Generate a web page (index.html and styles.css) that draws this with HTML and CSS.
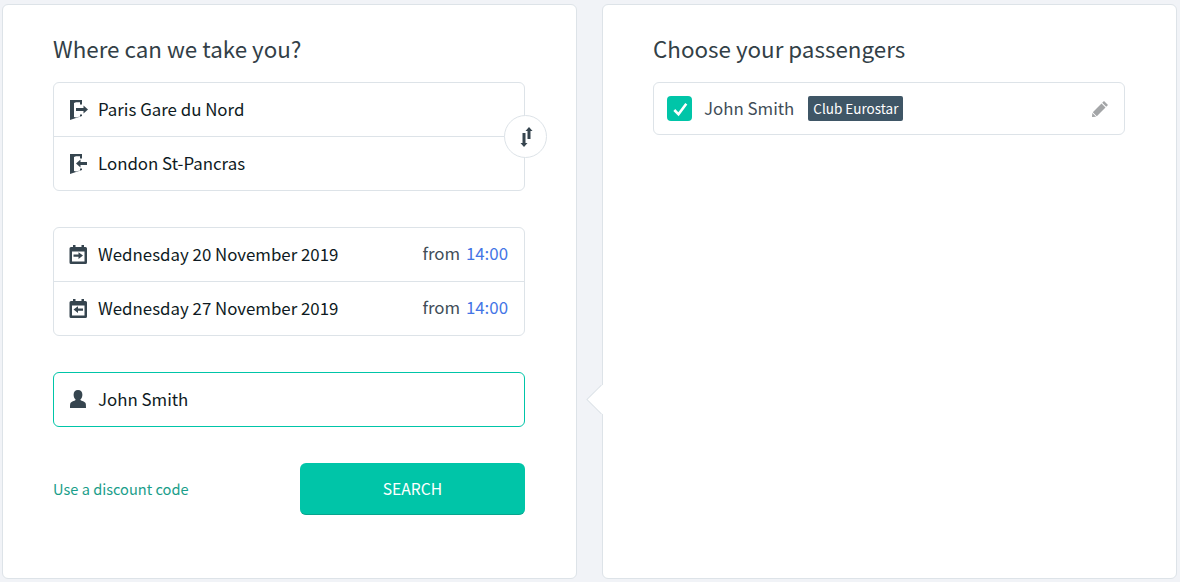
FILE: index.html
```html
<!DOCTYPE html>
<html lang="en">
<head>
  <meta charset="UTF-8">
  <title>Search trains</title>
  <link rel="stylesheet" href="styles.css">
</head>
<body>
  <div class="layout">
    <section class="panel">
      <h2 class="panel-title">Where can we take you?</h2>

      <div class="field-group route-group">
        <div class="field-row">
          <svg class="field-icon" viewBox="0 0 20 20"><path d="M0 0h12v4.500H10V2.200H6L4 3v14l2 .6 4-1.200v-1.900h2V16L0 20z"/><path d="M6 8h7.500V5.500l4.500 4-4.500 4V11H6z"/></svg>
          <span class="field-text">Paris Gare du Nord</span>
        </div>
        <div class="field-row">
          <svg class="field-icon" viewBox="0 0 20 20"><path d="M0 0h12v4.500H10V2.200H6L4 3v14l2 .6 4-1.200v-1.900h2V16L0 20z"/><path d="M17 8h-6.500V5.500L6 9.500l4.500 4V11H17z"/></svg>
          <span class="field-text">London St-Pancras</span>
        </div>
        <button class="swap-btn" type="button" aria-label="Swap stations">
          <svg viewBox="0 0 16 22" width="16" height="22"><path d="M11 1l3.500 4h-2v8h-3V5h-2z"/><path d="M4.500 7h3v10h2L6 21l-3.500-4h2z"/></svg>
        </button>
      </div>

      <div class="field-group">
        <div class="field-row">
          <svg class="field-icon" viewBox="0 0 20 20"><path fill-rule="evenodd" d="M3 0h2.500v2h6V0H14v2h1.500A1.500 1.500 0 0 1 17 3.500v14a1.500 1.500 0 0 1-1.500 1.500H1a1.500 1.500 0 0 1-1.500-1.500v-14A1.500 1.500 0 0 1 1 2h2zM2 6.500v10h12.500v-10z"/><path d="M3.500 9.500h5V7.300l4.500 3.300-4.500 3.300v-2.200h-5z"/></svg>
          <span class="field-text">Wednesday 20 November 2019</span>
          <span class="time-text">from <span class="time-value">14:00</span></span>
        </div>
        <div class="field-row">
          <svg class="field-icon" viewBox="0 0 20 20"><path fill-rule="evenodd" d="M3 0h2.500v2h6V0H14v2h1.500A1.500 1.500 0 0 1 17 3.500v14a1.500 1.500 0 0 1-1.500 1.500H1a1.500 1.500 0 0 1-1.500-1.500v-14A1.500 1.500 0 0 1 1 2h2zM2 6.500v10h12.500v-10z"/><path d="M13 9.500H8V7.300l-4.500 3.300L8 13.900v-2.200h5z"/></svg>
          <span class="field-text">Wednesday 27 November 2019</span>
          <span class="time-text">from <span class="time-value">14:00</span></span>
        </div>
      </div>

      <div class="field-group field-group-active">
        <div class="field-row">
          <svg class="field-icon" viewBox="0 0 20 20"><path d="M8 0c2.800 0 4.400 2 4.400 4.800 0 2.200-.9 4-2.100 5 .2.500.6.800 1.300 1 2.200.7 3.900 1.300 4.200 3 .1.800.2 2.200.2 4.200H0c0-2 .1-3.400.2-4.200.3-1.700 2-2.300 4.200-3 .7-.2 1.100-.5 1.300-1-1.200-1-2.100-2.800-2.100-5C3.600 2 5.200 0 8 0z"/></svg>
          <span class="field-text">John Smith</span>
        </div>
      </div>

      <div class="search-footer">
        <a class="discount-link" href="#">Use a discount code</a>
        <button class="search-btn" type="button">SEARCH</button>
      </div>
    </section>

    <section class="panel panel-passengers">
      <h2 class="panel-title">Choose your passengers</h2>
      <div class="passenger-row">
        <span class="checkbox">
          <svg viewBox="0 0 16 16" width="16" height="16"><path d="M2.300 9l4.200 4.300 7.800-10.500" fill="none" stroke="#fff" stroke-width="2.600"/></svg>
        </span>
        <span class="passenger-name">John Smith</span>
        <span class="badge">Club Eurostar</span>
        <svg class="edit-icon" viewBox="0 0 16 16"><path d="M12 0l4 4-1.800 1.800-4-4zM9.500 2.500l4 4-8.700 8.700-4-4zM.3 11.900l3.800 3.800L0 16z"/></svg>
      </div>
    </section>
  </div>
</body>
</html>
```
FILE: styles.css
```css
:root {
  --page-bg: #f1f3f7;
  --border-color: #dde3e8;
  --dark-color: #36454f;
  --teal-color: #00c5a8;
  --blue-color: #4475e6;
}

html, body {
  height: 100%;
}

body {
  margin: 0;
  background-color: var(--page-bg);
  font-family: "Noto Sans CJK SC", "Noto Sans", sans-serif;
  color: #0e1a22;
  overflow: hidden;
}

.layout {
  display: flex;
  gap: 25px;
  padding: 4px 3px 3px 2px;
  height: 575px;
}

.panel {
  position: relative;
  width: 575px;
  box-sizing: border-box;
  background: #fff;
  border: 1px solid var(--border-color);
  border-radius: 6px;
  padding: 28px 51px 0 50px;
}

/* little notch pointing at the active field */
.panel-passengers::before {
  content: "";
  position: absolute;
  left: -11px;
  top: 384px;
  width: 21px;
  height: 21px;
  background: #fff;
  transform: rotate(45deg);
  box-shadow: -1px 1px 0 var(--border-color);
}

.panel-title {
  margin: 0 0 19px;
  font-size: 22.4px;
  font-weight: 400;
  line-height: 30px;
  color: #333f47;
}

.field-group {
  position: relative;
  border: 1px solid var(--border-color);
  border-radius: 6px;
  margin-bottom: 36px;
}

.field-group-active {
  border-color: var(--teal-color);
}

.field-row {
  display: flex;
  align-items: center;
  height: 53px;
  padding: 0 16px;
}

.field-row + .field-row {
  border-top: 1px solid var(--border-color);
}

.field-icon {
  width: 20px;
  height: 20px;
  margin-right: 8px;
  flex: none;
  overflow: visible;
  fill: var(--dark-color);
}

.field-text {
  padding-bottom: 2px;
  font-size: 16.85px;
  line-height: 24px;
}

.time-text {
  margin-left: auto;
  padding-bottom: 4px;
  font-size: 16.85px;
  line-height: 24px;
  color: #414d57;
}

.time-value {
  margin-left: 2px;
  color: var(--blue-color);
}

.swap-btn {
  position: absolute;
  right: -23px;
  top: 32px;
  width: 43px;
  height: 43px;
  padding: 0;
  display: flex;
  align-items: center;
  justify-content: center;
  background: #fff;
  border: 1px solid var(--border-color);
  border-radius: 50%;
}

.swap-btn svg {
  fill: var(--dark-color);
}

.search-footer {
  display: flex;
  align-items: center;
  justify-content: space-between;
}

.discount-link {
  padding-bottom: 2px;
  font-size: 14.6px;
  color: #1a9e8a;
  text-decoration: none;
}

.search-btn {
  width: 225px;
  height: 52px;
  border: none;
  border-bottom: 1px solid #07a48d;
  border-radius: 6px;
  background: var(--teal-color);
  color: #fff;
  font-family: inherit;
  font-size: 15.7px;
}

.passenger-row {
  display: flex;
  align-items: center;
  height: 51px;
  padding: 0 16px 0 13px;
  border: 1px solid var(--border-color);
  border-radius: 6px;
}

.checkbox {
  display: flex;
  align-items: center;
  justify-content: center;
  width: 25px;
  height: 25px;
  margin-right: 12px;
  border-radius: 4px;
  background: var(--teal-color);
}

.passenger-name {
  padding-bottom: 2px;
  font-size: 16.85px;
  line-height: 24px;
  color: #414d57;
  margin-right: 14px;
}

.badge {
  padding: 0 5px;
  height: 25px;
  line-height: 25px;
  font-size: 13.5px;
  color: #fff;
  background: #3f5666;
  border-radius: 2px;
}

.edit-icon {
  margin-left: auto;
  width: 16px;
  height: 16px;
  fill: #a3a5a7;
}
```
